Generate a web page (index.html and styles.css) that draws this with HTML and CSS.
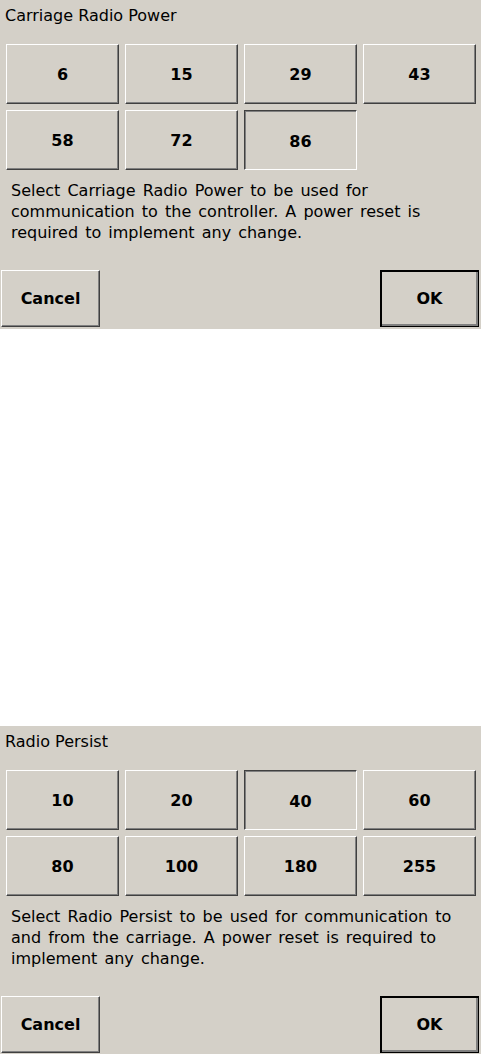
FILE: index.html
```html
<!DOCTYPE html>
<html lang="en">
<head>
    <meta charset="UTF-8">
    <meta name="viewport" content="width=device-width, initial-scale=1.0">
    <title>Radio Settings</title>
    <link rel="stylesheet" href="styles.css">
</head>
<body>

<div class="dialog">
    <div class="dialog-title">Carriage Radio Power</div>
    <div class="choices">
        <button class="choice">6</button>
        <button class="choice">15</button>
        <button class="choice">29</button>
        <button class="choice">43</button>
        <button class="choice">58</button>
        <button class="choice">72</button>
        <button class="choice pressed">86</button>
    </div>
    <p class="info">Select Carriage Radio Power to be used for<br>communication to the controller. A power reset is<br>required to implement any change.</p>
    <div class="actions">
        <button class="action">Cancel</button>
        <button class="action default">OK</button>
    </div>
</div>

<div class="dialog second">
    <div class="dialog-title">Radio Persist</div>
    <div class="choices">
        <button class="choice">10</button>
        <button class="choice">20</button>
        <button class="choice pressed">40</button>
        <button class="choice">60</button>
        <button class="choice">80</button>
        <button class="choice">100</button>
        <button class="choice">180</button>
        <button class="choice">255</button>
    </div>
    <p class="info">Select Radio Persist to be used for communication to<br>and from the carriage. A power reset is required to<br>implement any change.</p>
    <div class="actions">
        <button class="action">Cancel</button>
        <button class="action default">OK</button>
    </div>
</div>

</body>
</html>
```

FILE: styles.css
```css
body {
    font-family: "DejaVu Sans", Verdana, sans-serif;
    font-size: 16px;
    margin: 0;
    background-color: #fff;
    color: #000;
}
.dialog {
    height: 329px;
    background-color: #d4d0c8;
    display: flex;
    flex-direction: column;
    box-sizing: border-box;
}
.second {
    margin-top: 397px;
}
.dialog-title {
    padding: 5px 5px 0;
    line-height: 21px;
    height: 44px;
    box-sizing: border-box;
}
.choices {
    display: grid;
    grid-template-columns: repeat(4, 113px);
    grid-auto-rows: 60px;
    gap: 6px;
    margin-left: 6px;
}
button {
    font-family: inherit;
    font-size: 16px;
    font-weight: bold;
    color: #000;
    background-color: #d4d0c8;
    border-style: solid;
    border-width: 1px;
    border-color: #fff #404040 #404040 #fff;
    box-shadow: inset -1px -1px 0 #808080;
    padding: 0;
    margin: 0;
    cursor: pointer;
}
.choice.pressed {
    border-color: #404040 #fff #fff #404040;
    box-shadow: inset 1px 1px 0 #808080;
    padding-top: 2px;
}
.info {
    margin: 10px 0 0;
    padding-left: 11px;
    line-height: 21px;
    word-spacing: 2px;
}
.actions {
    display: flex;
    justify-content: space-between;
    margin-top: auto;
    padding: 0 2px 2px 1px;
}
.action {
    width: 99px;
    height: 57px;
}
.action.default {
    outline: 1px solid #000;
    outline-offset: -1px;
    border-color: #fff #000 #000 #fff;
    box-shadow: inset 1px 1px 0 #000, inset -2px -2px 0 #808080;
}
```
